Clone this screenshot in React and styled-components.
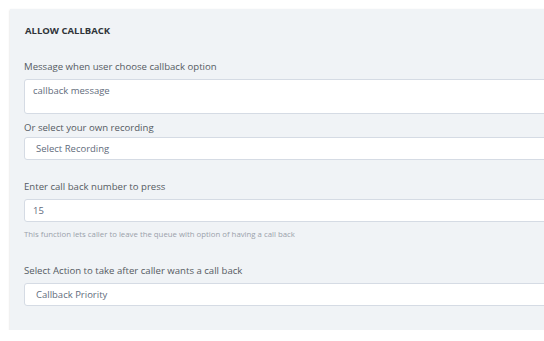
import React from "react";
import styled, { createGlobalStyle } from "styled-components";

const Global = createGlobalStyle`
  html, body { margin: 0; padding: 0; background: #ffffff; overflow: hidden; }
  body { font-family: "Open Sans", "Liberation Sans", sans-serif; }
`;

const Page = styled.div`
  padding: 9px 0 0 10px;
  width: 700px;
`;

const Panel = styled.section`
  background: #f0f3f6;
  padding: 15px 0 24px 14px;
  box-shadow: 0 1px 2px rgba(0, 0, 0, 0.18);
  width: 660px;
`;

const Title = styled.h3`
  margin: 0;
  font-size: 9.5px;
  line-height: 14px;
  font-weight: 700;
  color: #2f3439;
  padding-left: 1px;
`;

const Field = styled.div`
  display: flex;
  flex-direction: column;
  margin-top: ${(p) => p.$top}px;
`;

const Label = styled.label`
  font-size: 9.6px;
  line-height: 14px;
  color: #555b63;
  margin-bottom: ${(p) => p.$gap}px;
`;

const Box = styled.div`
  box-sizing: border-box;
  background: #ffffff;
  border: 1px solid #d5dbe4;
  border-radius: 3px;
  height: ${(p) => p.$h}px;
  padding: ${(p) => (p.$tall ? "4px" : "0")} 0 0 ${(p) => p.$indent}px;
  display: flex;
  align-items: ${(p) => (p.$tall ? "flex-start" : "center")};
  font-size: 9.5px;
  line-height: 14px;
  color: #5f6b7c;
`;

const Help = styled.div`
  font-size: 7.8px;
  line-height: 10px;
  color: #9aa1aa;
  margin-top: 7px;
`;

export default function App() {
  return (
    <>
      <Global />
      <Page>
        <Panel>
          <Title>ALLOW CALLBACK</Title>
          <Field $top={22}>
            <Label $gap={5}>Message when user choose callback option</Label>
            <Box $h={35} $tall $indent={8}>callback message</Box>
          </Field>
          <Field $top={7}>
            <Label $gap={2}>Or select your own recording</Label>
            <Box $h={23} $indent={11}>Select Recording</Box>
          </Field>
          <Field $top={20}>
            <Label $gap={5}>Enter call back number to press</Label>
            <Box $h={23} $indent={8}>15</Box>
            <Help>This function lets caller to leave the queue with option of having a call back</Help>
          </Field>
          <Field $top={25}>
            <Label $gap={5}>Select Action to take after caller wants a call back</Label>
            <Box $h={23} $indent={11}>Callback Priority</Box>
          </Field>
        </Panel>
      </Page>
    </>
  );
}
